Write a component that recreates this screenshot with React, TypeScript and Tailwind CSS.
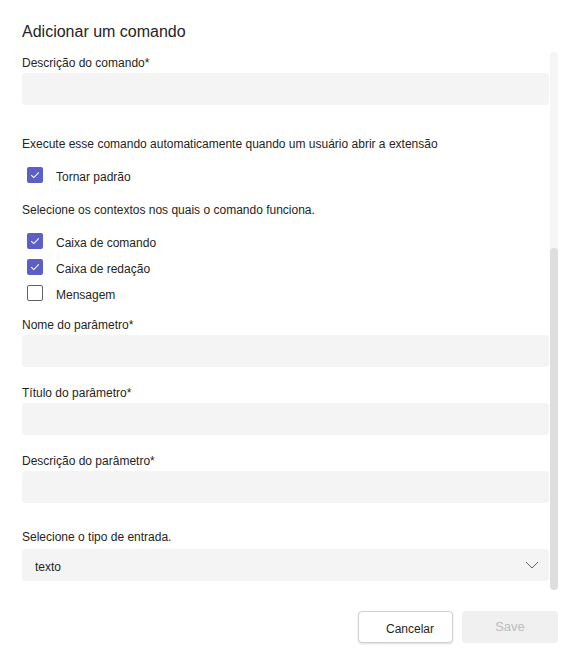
import React, { useState } from 'react';

const font = { fontFamily: '"Liberation Sans", Arial, sans-serif' };

const Field: React.FC<{ label: string; className?: string }> = ({ label, className }) => (
  <div className={className}>
    <p className="text-[12px] leading-4 text-[#242424] mb-[2px]">{label}</p>
    <div className="h-8 w-full rounded-[4px] bg-[#f4f4f4]" />
  </div>
);

const Check: React.FC<{ label: string; checked: boolean; onToggle: () => void }> = ({ label, checked, onToggle }) => (
  <button onClick={onToggle} className="flex h-4 items-center text-left">
    <span
      className={`ml-[5px] flex h-4 w-4 items-center justify-center rounded-[2px] ${
        checked ? 'bg-[#5b5fc7]' : 'border border-[#616161] bg-white'
      }`}
    >
      {checked && (
        <svg width="10" height="8" viewBox="0 0 10 8" fill="none">
          <path d="M1.2 4.2 L3.8 6.6 L8.8 1.4" stroke="white" strokeWidth="1.1" />
        </svg>
      )}
    </span>
    <span className="ml-[13px] pt-[3px] text-[12px] leading-4 text-[#242424]">{label}</span>
  </button>
);

const App: React.FC = () => {
  const [checks, setChecks] = useState({
    padrao: true,
    comando: true,
    redacao: true,
    mensagem: false,
  });

  return (
    <div className="w-[580px] h-[665px] bg-white pl-[22px] pr-[22px] pt-[20px] flex flex-col" style={font}>
      <h1 className="text-[16px] leading-6 text-[#242424] font-normal h-8">Adicionar um comando</h1>

      <div className="flex h-[538px]">
        {/* Form */}
        <div className="flex-1 pt-[3px] overflow-hidden">
          <Field label="Descrição do comando*" />

          <p className="mt-[31px] text-[12px] leading-4 text-[#242424]">
            Execute esse comando automaticamente quando um usuário abrir a extensão
          </p>
          <div className="mt-[15px]">
            <Check
              label="Tornar padrão"
              checked={checks.padrao}
              onToggle={() => setChecks({ ...checks, padrao: !checks.padrao })}
            />
          </div>

          <p className="mt-[19px] text-[12px] leading-4 text-[#242424]">
            Selecione os contextos nos quais o comando funciona.
          </p>
          <div className="mt-[15px] flex flex-col gap-[10px]">
            <Check
              label="Caixa de comando"
              checked={checks.comando}
              onToggle={() => setChecks({ ...checks, comando: !checks.comando })}
            />
            <Check
              label="Caixa de redação"
              checked={checks.redacao}
              onToggle={() => setChecks({ ...checks, redacao: !checks.redacao })}
            />
            <Check
              label="Mensagem"
              checked={checks.mensagem}
              onToggle={() => setChecks({ ...checks, mensagem: !checks.mensagem })}
            />
          </div>

          <Field label="Nome do parâmetro*" className="mt-[16px]" />
          <Field label="Título do parâmetro*" className="mt-[18px]" />
          <Field label="Descrição do parâmetro*" className="mt-[18px]" />

          <div className="mt-[26px]">
            <p className="text-[12px] leading-4 text-[#242424] mb-[4px]">Selecione o tipo de entrada.</p>
            <div className="flex h-8 w-full items-center justify-between rounded-[4px] bg-[#f4f4f4] pl-[13px] pr-[10px]">
              <span className="pt-[3px] text-[12px] text-[#242424]">texto</span>
              <svg width="14" height="8" viewBox="0 0 14 8" fill="none">
                <path d="M1 1 L7 7 L13 1" stroke="#616161" strokeWidth="1" />
              </svg>
            </div>
          </div>
        </div>

        {/* Scrollbar */}
        <div className="ml-[1px] flex w-2 flex-col rounded-full bg-[#f5f5f5]">
          <div className="h-[196px]" />
          <div className="flex-1 rounded-full bg-[#dedede]" />
        </div>
      </div>

      {/* Actions */}
      <div className="mt-[21px] flex justify-end gap-[9px]">
        <button className="h-8 w-[95px] rounded-[4px] border border-[#d1d1d1] bg-white pl-[9px] pt-[4px] text-[12px] text-[#242424] shadow-[0_1px_2px_rgba(0,0,0,0.14)]">
          Cancelar
        </button>
        <button className="h-8 w-[96px] rounded-[4px] bg-[#f0f0f0] text-[13px] text-[#bdbdbd]">Save</button>
      </div>
    </div>
  );
};

export default App;
